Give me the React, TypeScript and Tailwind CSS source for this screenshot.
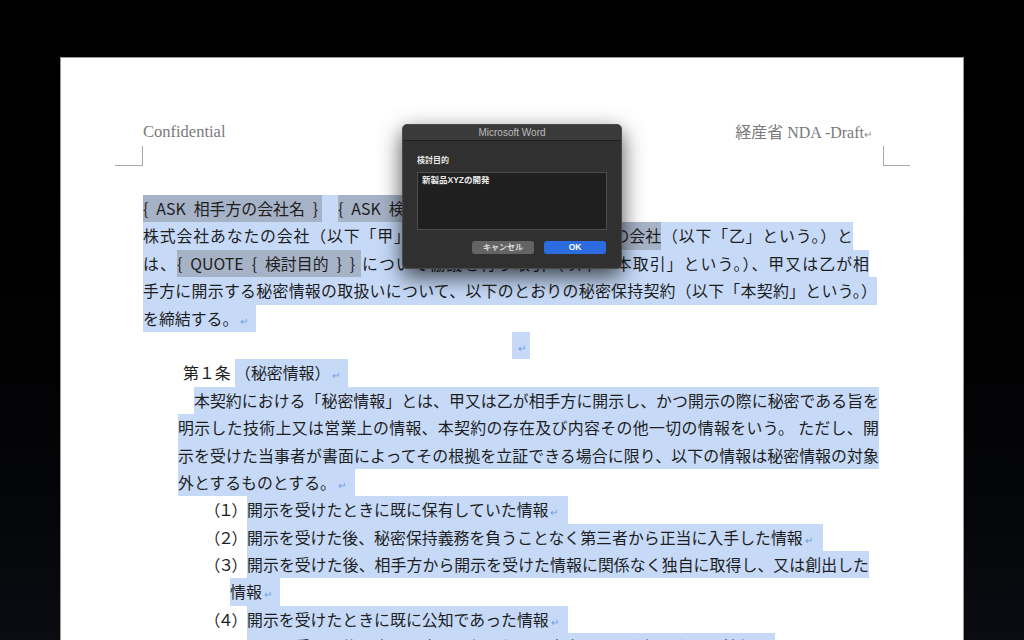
import React from 'react';

const Ret: React.FC = () => <span className="ml-[2px] text-[10px] text-[#6e9ce6]">↵</span>;

const Row: React.FC<{ className?: string; children?: React.ReactNode }> = ({ className = '', children }) => (
  <div className={`flex h-[27.4px] leading-[27.4px] whitespace-nowrap ${className}`}>{children}</div>
);

const Sel: React.FC<{ className?: string; children?: React.ReactNode }> = ({ className = '', children }) => (
  <span className={`block h-full bg-[#c6daf8] ${className}`}>{children}</span>
);

const Field: React.FC<{ className?: string; children?: React.ReactNode }> = ({ className = '', children }) => (
  <span className={`inline-block h-full align-top bg-[#a6b2c6] ${className}`}>{children}</span>
);

const Num: React.FC<{ n: string }> = ({ n }) => (
  <span className="block w-[35px] [font-feature-settings:'palt']">（{n}）</span>
);

const App: React.FC = () => {
  return (
    <div className="relative w-[1024px] h-[640px] overflow-hidden bg-linear-to-b from-black to-[#0a0c11] pt-[57px] pl-[60px]">
      <div
        lang="ja"
        className="w-[904px] h-[700px] bg-white border border-[#9a9a9a] pl-[54px] pt-[64px] text-[#1e1e1e] font-['Noto_Sans_CJK_JP',sans-serif] text-[15.9px]"
      >
        {/* header */}
        <div className="ml-[28px] w-[729px] flex justify-between items-center h-[21px] text-[#7a7a7a] font-['Liberation_Serif','Noto_Sans_CJK_JP',serif]">
          <span className="text-[16.5px]">Confidential</span>
          <span className="text-[16px]">
            経産省 NDA -Draft<span className="text-[10px] text-[#888]">↵</span>
          </span>
        </div>

        {/* crop marks */}
        <div className="mt-[3px] w-[795px] flex justify-between">
          <div className="w-[28px] h-[20px] border-r border-b border-[#a8a8a8]" />
          <div className="w-[27px] h-[20px] border-l border-b border-[#a8a8a8]" />
        </div>

        {/* body */}
        <div className="ml-[28px] mt-[29px]">
          <Row>
            <Field className="w-[179px]">{'{\u2002ASK\u2002相手方の会社名\u2002}'}</Field>
            <Sel className="w-[16px]" />
            <Field className="w-[182px]">{'{\u2002ASK\u2002検討目的\u2002}'}</Field>
          </Row>
          <Row>
            <Sel className="w-[710px] [text-align-last:justify]">
              株式会社あなたの会社（以下「甲」という。）と<Field>株式会社相手方の会社</Field>（以下「乙」という。）と
            </Sel>
          </Row>
          <Row>
            <Sel className="w-[726px] [text-align-last:justify]">
              は、<Field className="w-[184px] [text-align-last:auto]">{'{\u2002QUOTE\u2002{\u2002検討目的\u2002}\u2002}'}</Field>について協議を行う取引（以下「本取引」という。）、甲又は乙が相
            </Sel>
          </Row>
          <Row>
            <Sel className="w-[734px] [text-align-last:justify]">
              手方に開示する秘密情報の取扱いについて、以下のとおりの秘密保持契約（以下「本契約」という。）
            </Sel>
          </Row>
          <Row>
            <Sel className="w-[113px]">
              を締結する。<Ret />
            </Sel>
          </Row>
          <Row className="pl-[369px]">
            <Sel className="w-[18px] text-center">
              <Ret />
            </Sel>
          </Row>
          <Row className="pl-[40px]">
            <span className="block w-[52px]">第１条</span>
            <Sel className="w-[113px]">
              （秘密情報）<Ret />
            </Sel>
          </Row>
          <Row className="pl-[51px]">
            <Sel className="w-[685px] [text-align-last:justify]">
              本契約における「秘密情報」とは、甲又は乙が相手方に開示し、かつ開示の際に秘密である旨を
            </Sel>
          </Row>
          <Row className="pl-[35px]">
            <Sel className="w-[701px] [text-align-last:justify]">
              明示した技術上又は営業上の情報、本契約の存在及び内容その他一切の情報をいう。 ただし、開
            </Sel>
          </Row>
          <Row className="pl-[35px]">
            <Sel className="w-[701px] [text-align-last:justify]">
              示を受けた当事者が書面によってその根拠を立証できる場合に限り、以下の情報は秘密情報の対象
            </Sel>
          </Row>
          <Row className="pl-[35px]">
            <Sel className="w-[177px]">
              外とするものとする。<Ret />
            </Sel>
          </Row>
          <Row className="pl-[69px]">
            <Num n="１" />
            <Sel className="w-[321px]">
              開示を受けたときに既に保有していた情報<Ret />
            </Sel>
          </Row>
          <Row className="pl-[69px]">
            <Num n="２" />
            <Sel className="w-[576px]">
              開示を受けた後、秘密保持義務を負うことなく第三者から正当に入手した情報<Ret />
            </Sel>
          </Row>
          <Row className="pl-[69px]">
            <Num n="３" />
            <Sel className="w-[622px] [text-align-last:justify]">
              開示を受けた後、相手方から開示を受けた情報に関係なく独自に取得し、又は創出した
            </Sel>
          </Row>
          <Row className="pl-[87px]">
            <Sel className="w-[50px]">
              情報<Ret />
            </Sel>
          </Row>
          <Row className="pl-[69px]">
            <Num n="４" />
            <Sel className="w-[321px]">
              開示を受けたときに既に公知であった情報<Ret />
            </Sel>
          </Row>
          <Row className="pl-[69px]">
            <Num n="５" />
            <Sel className="w-[528px]">開示を受けた後、自己の責めに帰し得ない事由により公知となった情報</Sel>
          </Row>
        </div>
      </div>

      {/* Word input dialog */}
      <div className="absolute left-[402px] top-[124px] w-[220px] h-[145px] rounded-[5px] overflow-hidden bg-[#303030] border border-[#4a4a4a] shadow-[0_8px_22px_rgba(0,0,0,0.7)] font-['Liberation_Sans','Noto_Sans_CJK_JP',sans-serif]">
        <div className="h-[16px] bg-[#3a3a3a] border-b border-[#1f1f1f] flex items-center justify-center text-[10px] text-[#bdbdbd]">
          Microsoft Word
        </div>
        <div className="px-[14px] pt-[15px]">
          <div className="h-[10px] leading-[10px] text-[8px] font-bold text-[#e6e6e6]">検討目的</div>
          <div className="mt-[6px] w-[190px] h-[58px] bg-[#1f1f1f] border border-[#4d4d4d] pl-[4px] pt-[1px] text-[8.5px] font-bold text-[#ececec]">
            新製品XYZの開発
          </div>
          <div className="mt-[11px] flex justify-end gap-[10px] pr-[1px]">
            <div className="w-[62px] h-[13px] rounded-[3px] bg-[#646464] flex items-center justify-center text-[8px] font-bold text-[#dedede]">
              キャンセル
            </div>
            <div className="w-[62px] h-[13px] rounded-[3px] bg-[#2c6ce0] flex items-center justify-center text-[8.5px] font-bold text-white">
              OK
            </div>
          </div>
        </div>
      </div>
    </div>
  );
};

export default App;
